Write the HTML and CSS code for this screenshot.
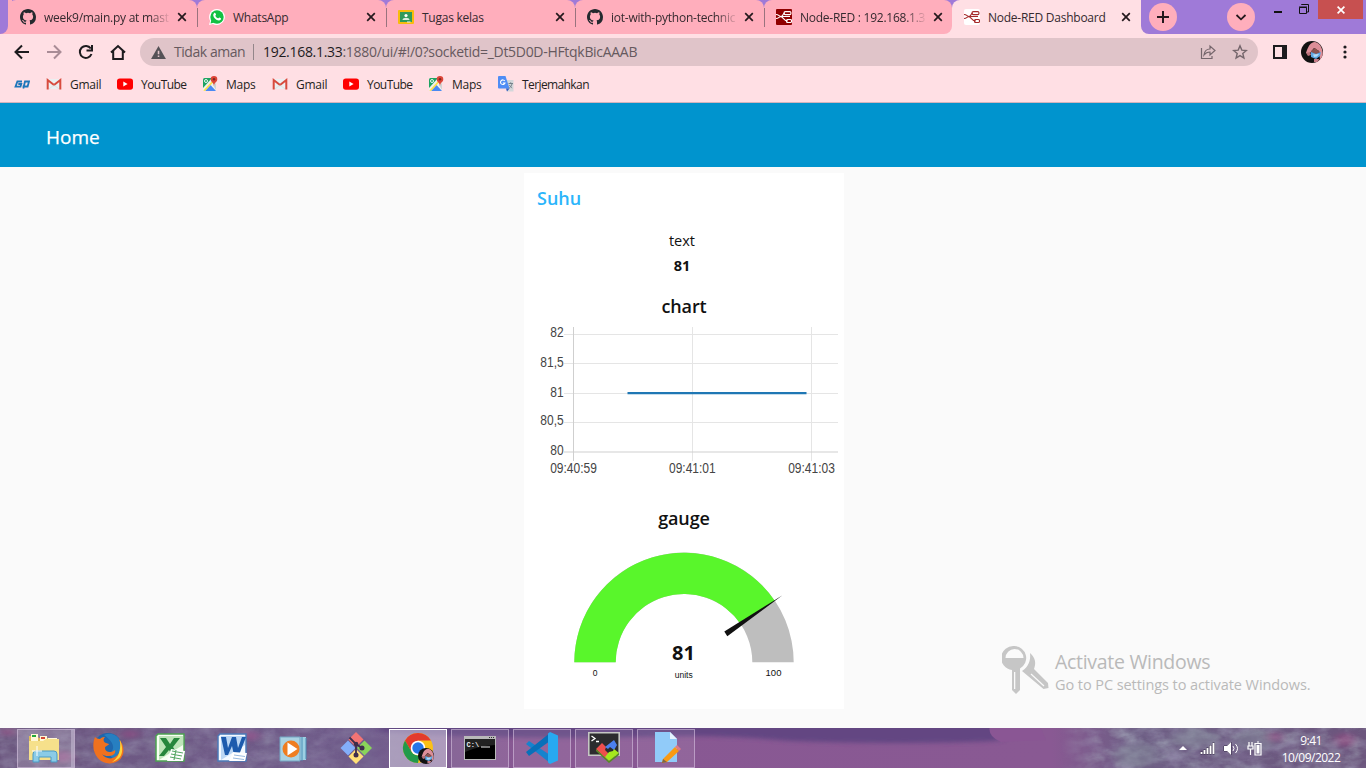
FILE: index.html
```html
<!DOCTYPE html>
<html lang="id">
<head>
<meta charset="utf-8">
<title>Node-RED Dashboard</title>
<link rel="stylesheet" href="styles.css">
</head>
<body>
<svg class="defs" width="0" height="0">
  <defs>
    <symbol id="github" viewBox="0 0 16 16"><path fill="#24292e" fill-rule="evenodd" d="M8 0C3.58 0 0 3.58 0 8c0 3.54 2.29 6.53 5.47 7.59.4.07.55-.17.55-.38 0-.19-.01-.82-.01-1.49-2.01.37-2.53-.49-2.69-.94-.09-.23-.48-.94-.82-1.13-.28-.15-.68-.52-.01-.53.63-.01 1.08.58 1.23.82.72 1.21 1.87.87 2.33.66.07-.52.28-.87.51-1.07-1.78-.2-3.64-.89-3.64-3.95 0-.87.31-1.59.82-2.15-.08-.2-.36-1.02.08-2.12 0 0 .67-.21 2.2.82a7.6 7.6 0 0 1 4 0c1.53-1.04 2.2-.82 2.2-.82.44 1.1.16 1.92.08 2.12.51.56.82 1.27.82 2.15 0 3.07-1.87 3.75-3.65 3.95.29.25.54.73.54 1.48 0 1.07-.01 1.93-.01 2.2 0 .21.15.46.55.38A8.01 8.01 0 0 0 16 8c0-4.42-3.58-8-8-8z"/></symbol>
    <symbol id="x" viewBox="0 0 10 10"><path d="M1.2 1.2l7.6 7.6M8.8 1.2L1.2 8.8" stroke="#24191d" stroke-width="1.7"/></symbol>
    <symbol id="nodes" viewBox="0 0 16 16"><g fill="none" stroke="currentColor" stroke-width="1.1"><path d="M0 5.500c3 0 3 2 5 2 2.500 0 1.500-3.500 4-3.500M4 7.500c4 0 3 4.500 8 4.500M0 9.500c3 0 3-2 5-2h9"/><rect x="8" y="2.600" width="7" height="3" rx="1.300"/><rect x="10.500" y="10.500" width="5" height="3" rx="1"/></g></symbol>
    <symbol id="gmail" viewBox="0 0 16 16"><path fill="#eceff1" d="M2 3h12v10H2z"/><path d="M1.700 13.500V4L8 9l6.300-5v9.500" fill="none" stroke="#d84b3e" stroke-width="2"/><path d="M3 13l5-4 5 4" fill="none" stroke="#d5d5d5" stroke-width=".6"/></symbol>
    <symbol id="youtube" viewBox="0 0 16 16"><rect y="2.500" width="16" height="11.300" rx="2.800" fill="#f00"/><path d="M6.300 5.600v5l4.300-2.500z" fill="#fff"/></symbol>
    <symbol id="maps" viewBox="0 0 16 16"><rect x="1" y="2" width="13" height="13" rx="1.500" fill="#f1f1ee"/><path d="M1 3.500Q1 2 2.500 2H10L1 12z" fill="#1ea362"/><path d="M3 15l5.500-6 5.500 6z" fill="#4a89f3"/><path d="M1.300 14.500L12 3l1.500 1L3 15z" fill="#ffe047"/><path d="M11 9l3-2v7z" fill="#d0d2d2"/><circle cx="4" cy="5" r="1.500" fill="none" stroke="#fff" stroke-width=".9"/><path d="M12 0a3.300 3.300 0 0 1 3.300 3.300C15.300 6 12.300 6.500 12 10c-.3-3.500-3.300-4-3.300-6.700A3.300 3.300 0 0 1 12 0z" fill="#dc4437"/><circle cx="12" cy="3.300" r="1.200" fill="#80271f"/></symbol>
    <symbol id="avatar" viewBox="0 0 22 22"><clipPath id="av"><circle cx="11" cy="11" r="11"/></clipPath><g clip-path="url(#av)"><path fill="#111" d="M0 0h22v22H0z"/><path d="M5 12C7 6 9 1 14 1c6 1 8 8 8 14l-3 4-1-9-5-3-4 5z" fill="#dd8e98"/><path d="M10 10l4-3 5 4-1 3-8-1z" fill="#8c5350"/><path d="M5 12l4-1 1 3-3 1z" fill="#b76f78"/><path d="M10 11l5 2 5-2-1 4-4 3-5-2z" fill="#5fa8e4"/><path d="M12 13.500l6-.5-2 2.500-3 .5z" fill="#b8dcf5"/><path d="M13 18l5 0-1 3h-4z" fill="#c77c88"/></g></symbol>
  </defs>
</svg>

<header class="browser">
  <div class="strip">
    <div class="edge"></div>
    <div class="tab first"><svg class="fav"><use href="#github"/></svg><span class="name fade">week9/main.py at mast</span><svg class="close"><use href="#x"/></svg></div>
    <div class="tab"><svg class="fav" viewBox="0 0 16 16"><path d="M8 0a8 8 0 1 1-4 15L0 16l1.100-4A8 8 0 0 1 8 0z" fill="#fff"/><circle cx="8" cy="8" r="6.700" fill="#12c143"/><path d="M1.500 14.500l1-4 3 3z" fill="#12c143"/><path d="M5 4.300c1-1 1.500-.2 2 1.300.2.600-.8 1-.6 1.400.6 1.200 1.500 1.900 2.700 2.300.5.100.9-1 1.300-.8 1.800.8 2 1 1.400 2-1.400 2-4.300.6-5.900-1C4.300 7.900 3.500 5.800 5 4.300z" fill="#fff"/></svg><span class="name">WhatsApp</span><svg class="close"><use href="#x"/></svg></div>
    <div class="tab"><svg class="fav" viewBox="0 0 16 16"><rect y="1" width="16" height="14" rx="1" fill="#f6bc0c"/><rect x="2" y="3" width="12" height="10" fill="#2f9a5b"/><circle cx="8" cy="6.500" r="1.600" fill="#fff"/><path d="M4.500 11c0-3 7-3 7 0z" fill="#d8eedf"/><path d="M9 12.500h3.500v1H9z" fill="#eee"/></svg><span class="name">Tugas kelas</span><svg class="close"><use href="#x"/></svg></div>
    <div class="tab"><svg class="fav"><use href="#github"/></svg><span class="name fade">iot-with-python-technic</span><svg class="close"><use href="#x"/></svg></div>
    <div class="tab last"><span class="fav red"><svg width="16" height="16"><use href="#nodes"/></svg></span><span class="name fade">Node-RED : 192.168.1.3</span><svg class="close"><use href="#x"/></svg></div>
    <div class="tab active"><span class="fav white"><svg width="16" height="16"><use href="#nodes"/></svg></span><span class="name">Node-RED Dashboard</span><svg class="close"><use href="#x"/></svg></div>
    <div class="frame">
      <svg class="round plus" viewBox="0 0 28 28"><circle cx="14" cy="14" r="14" fill="#ffaebc"/><path d="M14 8v12M8 14h12" stroke="#24191d" stroke-width="2"/></svg>
      <svg class="round down" viewBox="0 0 28 28"><circle cx="14" cy="14" r="14" fill="#ffaebc"/><path d="M9.500 12l4.500 4.300 4.500-4.300" fill="none" stroke="#24191d" stroke-width="1.800"/></svg>
      <svg class="wmin" width="8" height="2"><path d="M0 0h8v2H0z" fill="#111"/></svg>
      <svg class="wres" width="10" height="10" viewBox="0 0 10 10"><path d="M.5 3.500h7v6h-7zM0 3h8M2.500 1V.500h7V8H8" fill="none" stroke="#111"/></svg>
      <div class="wclose"><svg width="8" height="8" viewBox="0 0 8 8"><path d="M.6.600l6.800 6.800M7.400.600L.6 7.400" stroke="#fff" stroke-width="1.700"/></svg></div>
    </div>
  </div>

  <div class="toolbar">
    <svg class="nav" viewBox="0 0 124 36" fill="none" stroke="#1d1b1e" stroke-width="2"><path d="M29 18H16M22 11.500L15.500 18l6.500 6.500"/><path stroke="#a98c96" d="M47 18h13M54 11.500l6.500 6.500-6.500 6.500"/><path d="M90.800 14.500A6 6 0 1 0 91.500 20"/><path d="M92 11v5.500H86.500" /><path d="M111 18.500l7-6.500 7 6.500M113.200 17V25h9.600v-8" /></svg>
    <div class="omni">
      <svg class="warn" viewBox="0 0 16 14"><path d="M8 0l8 14H0z" fill="#545156"/><path d="M7.200 5h1.700v4H7.200zM7.200 10.300h1.700v1.600H7.200z" fill="#e0c4c9"/></svg>
      <span class="unsafe">Tidak aman</span><i class="bar"></i><span class="url"><b>192.168.1.33</b>:1880/ui/#!/0?socketid=_Dt5D0D-HFtqkBicAAAB</span>
      <svg class="acts" viewBox="0 0 48 16" fill="none" stroke="#75666c" stroke-width="1.200"><path d="M1.500 4v10.500H12V12"/><path d="M4 11c.5-4 3-6 6-6V2l5 4.500-5 4.500V8c-3 0-4.500 1-6 3z"/><path stroke-width="1.400" d="M40 1.800l1.800 4.300 4.500.4-3.500 3 1.100 4.500-3.900-2.400-3.900 2.400 1.100-4.500-3.500-3 4.500-.4z"/></svg>
    </div>
    <svg class="side" viewBox="0 0 14 14"><path d="M0 0h14v14H0z" fill="#1d1b1e"/><path d="M2 2h7v10H2z" fill="#ffdfe4"/></svg>
    <svg class="pic"><use href="#avatar"/></svg>
    <svg class="dots" viewBox="0 0 4 14" fill="#1d1b1e"><circle cx="2" cy="2" r="1.600"/><circle cx="2" cy="7" r="1.600"/><circle cx="2" cy="12" r="1.600"/></svg>
  </div>

  <nav class="marks">
    <span class="mark m0"><svg width="16" height="16" viewBox="0 0 16 16" fill="none" stroke="#1f76ba" stroke-width="1.800"><path d="M8 5.500H3.400L1.500 10.700H6.500L7.300 8H4.300M9.300 12.500L11 5.500h4l-1.400 5H8.600"/></svg></span>
    <span class="mark m1"><svg><use href="#gmail"/></svg>Gmail</span>
    <span class="mark m2"><svg><use href="#youtube"/></svg>YouTube</span>
    <span class="mark m3"><svg><use href="#maps"/></svg>Maps</span>
    <span class="mark m1"><svg><use href="#gmail"/></svg>Gmail</span>
    <span class="mark m2"><svg><use href="#youtube"/></svg>YouTube</span>
    <span class="mark m3"><svg><use href="#maps"/></svg>Maps</span>
    <span class="mark m4"><svg viewBox="0 0 16 16"><path d="M6 4h9.500v11.500H9z" fill="#d3d7da"/><path d="M1 0h6.500l4 12.500H1A1 1 0 0 1 0 11.500V1a1 1 0 0 1 1-1z" fill="#4f8df5"/><path d="M8 12.500h3.500L9 15.500z" fill="#3059c0"/><path d="M6.800 5A2.300 2.300 0 1 0 7 7H4.800" fill="none" stroke="#fff" stroke-width="1.100"/><path d="M10.500 7.500H15M12.700 6.300v1.200M14 7.700c-.4 2.300-1.500 3.500-2.700 4.300M11.500 9c.7 1.500 1.500 2.300 2.700 3" fill="none" stroke="#6d7c84" stroke-width=".9"/></svg>Terjemahkan</span>
  </nav>
</header>

<div class="appbar"><h1>Home</h1></div>

<main class="page">
  <section class="card">
    <h2>Suhu</h2>
    <div class="reading"><span>text</span><strong>81</strong></div>
    <h3 class="charth">chart</h3>
    <svg class="chart" viewBox="524 323 320 164">
      <g fill="none" stroke="#e5e5e5"><path d="M564 334.500h274M564 363.500h274M564 393.500h274M564 422.500h274M692.500 327v134M811.500 327v134"/><path stroke="#cfcfcf" d="M573.500 327v134M564 452h274"/></g>
      <path d="M627.500 393.200H806.500" stroke="#1f77b4" stroke-width="2.200"/>
      <g class="ticks"><g text-anchor="end">
        <text transform="translate(563.700 337.300) scale(1 1.160)">82</text><text transform="translate(563.700 367.300) scale(1 1.160)">81,5</text><text transform="translate(563.700 396.700) scale(1 1.160)">81</text><text transform="translate(563.700 425.300) scale(1 1.160)">80,5</text><text transform="translate(563.700 455) scale(1 1.160)">80</text></g>
        <g text-anchor="middle"><text transform="translate(573.500 473.300) scale(1 1.160)">09:40:59</text><text transform="translate(692.300 473.300) scale(1 1.160)">09:41:01</text><text transform="translate(811.500 473.300) scale(1 1.160)">09:41:03</text></g></g>
    </svg>
    <h3 class="gaugeh">gauge</h3>
    <svg class="gauge" viewBox="524 538 320 171">
      <path d="M574.300 662.300A109.700 109.700 0 0 1 793.700 662.300H752.300A68.300 68.300 0 0 0 615.700 662.300Z" fill="#bebebe"/>
      <path d="M574.300 662.300A109.700 109.700 0 0 1 774.700 600.700L740.500 623.900A68.300 68.300 0 0 0 615.700 662.300Z" fill="#59f62b"/>
      <path d="M724.300 631.600L782.500 595.200 727.300 636.200Z" fill="#111"/>
      <g text-anchor="middle" fill="#111"><text class="val" x="683.500" y="660">81</text><text class="lim" x="595" y="676">0</text><text class="lim hundred" x="773.500" y="676">100</text><text class="units" x="683.700" y="678">units</text></g>
    </svg>
  </section>
</main>

<aside class="watermark">
  <svg width="48" height="50" viewBox="0 0 48 50"><g fill="#c6c6c6"><path fill-rule="evenodd" d="M12.500 1a12 12 0 0 1 5.500 22.500V45l-4 4-4-4V25A12 12 0 0 1 12.500 1zM12.500 4a9 9 0 0 0-9 9h18a9 9 0 0 0-9-9zM12 27v17h1.300V27z"/><path d="M28 8c6 5 6 11 4 16l14 14 .5 5-5 1L20 26c6-4 9-10 8-18z"/></g><path d="M29 29l13 12" stroke="#fafafa" stroke-width="1.200"/></svg>
  <div><p class="w1">Activate Windows</p><p class="w2">Go to PC settings to activate Windows.</p></div>
</aside>

<footer class="taskbar">
  <svg class="wall" viewBox="0 0 1366 40" preserveAspectRatio="none">
    <defs>
      <filter id="soft" x="-10%" y="-50%" width="120%" height="200%"><feGaussianBlur stdDeviation="5 2"/></filter>
      <filter id="leaf" x="0" y="0" width="100%" height="100%"><feTurbulence type="fractalNoise" baseFrequency=".05 .09" numOctaves="4" seed="8"/><feColorMatrix values="0 0 0 0 .46  0 0 0 0 .53  0 0 0 0 .59  2 0 0 0 -.7"/></filter>
      <filter id="dark" x="0" y="0" width="100%" height="100%"><feTurbulence type="fractalNoise" baseFrequency=".06 .08" numOctaves="4" seed="3"/><feColorMatrix values="0 0 0 0 .3  0 0 0 0 .24  0 0 0 0 .42  0 2 0 0 -.8"/></filter>
      <linearGradient id="base"><stop offset="0" stop-color="#6c577f"/><stop offset=".27" stop-color="#705c8b"/><stop offset=".38" stop-color="#885893"/><stop offset=".77" stop-color="#895993"/><stop offset=".83" stop-color="#6d5e84"/><stop offset="1" stop-color="#6c567d"/></linearGradient>
      <linearGradient id="fin"><stop offset="0" stop-color="#000"/><stop offset=".15" stop-color="#fff"/></linearGradient>
      <linearGradient id="fout"><stop offset=".7" stop-color="#fff"/><stop offset="1" stop-color="#000"/></linearGradient>
      <mask id="right"><path d="M1060 0h306v40h-306z" fill="url(#fin)"/></mask>
      <mask id="left"><path d="M0 0h420v40H0z" fill="url(#fout)"/></mask>
    </defs>
    <path d="M0 0h1366v40H0z" fill="url(#base)"/>
    <g mask="url(#left)">
      <path d="M0 0h420v40H0z" filter="url(#dark)" opacity=".45"/>
      <path d="M0 0h420v40H0z" filter="url(#leaf)" opacity=".25"/>
    </g>
    <path d="M380-6H1000V13Q900 17 790 13 720 6 640 9 500 12 380 4z" fill="#5e4581" opacity=".9" filter="url(#soft)"/>
    <path d="M990-2h50l6 14-45 2q-14-6-11-16z" fill="#8a5694"/>
    <g mask="url(#right)">
      <path d="M1060 0h306v40h-306z" filter="url(#leaf)" opacity=".5"/>
      <path d="M1060 0h306v40h-306z" filter="url(#dark)" opacity=".4"/>
      <g fill="#84899a" opacity=".5" filter="url(#soft)"><ellipse cx="1136" cy="27" rx="22" ry="12"/><ellipse cx="1194" cy="10" rx="24" ry="9"/><ellipse cx="1256" cy="12" rx="20" ry="10"/></g>
    </g>
    <g fill="#a94383" opacity=".4" filter="url(#soft)"><ellipse cx="8" cy="4" rx="8" ry="4"/><ellipse cx="63" cy="29" rx="10" ry="6"/><ellipse cx="130" cy="6" rx="9" ry="4"/><ellipse cx="250" cy="8" rx="9" ry="5"/><ellipse cx="1275" cy="9" rx="7" ry="5"/><ellipse cx="1345" cy="12" rx="10" ry="7"/></g>
  </svg>
  <div class="apps">
    <span class="app open stack"><svg viewBox="0 0 32 32"><path d="M1 4h8l2 2h18v22H1z" fill="#dfbe5c"/><path d="M3 2h7v8H3zM12 4h7v6h-7zM20 6h9v8h-9z" fill="#fff8d7"/><path d="M4 3h4v2H4z" fill="#23a83b"/><path d="M13 5h4v2h-4z" fill="#d34834"/><path d="M22 7h4v2h-4z" fill="#2b8ae0"/><path d="M1 9h14l3-2h13v21H1z" fill="#f6e08b"/><path d="M5 30V22q0-3 3-3h18q3 0 3 3v8h-6v-5H11v5z" fill="#8bcbe7" stroke="#4b9bc6"/><path d="M9 14v10M4 19h10" stroke="#fff"/></svg></span>
    <span class="app"><svg viewBox="0 0 32 32"><circle cx="16" cy="15" r="14" fill="#1f67ae"/><path d="M12 3c9-4 18 3 18 13l-8 12-5-6c7-5 5-12-5-19z" fill="#277fc1"/><path d="M3 5c1 1 3 2 5 2 2-2 4-2 5-2-2 2-2 5 1 6l3 1c-1 2-4 2-4 4 0 5 7 5 10 2 2 6-9 8-13 4 4 6 13 6 17-1 3-6 1-11 0-14 8 9 5 22-6 24C8 34-3 20 3 5z" fill="#ef711f"/><path d="M28 8c5 12 1 20-8 22 7-4 9-12 8-22z" fill="#ffd43b"/></svg></span>
    <span class="app"><svg viewBox="0 0 32 32"><path d="M4 2h26v27H2V4z" fill="#f7fff3" stroke="#4ca251" stroke-width="1.500"/><path d="M5 4h24v9L5 28z" fill="#bee5b9"/><path d="M6 6h6l4 6 4-6h6l-7 9 6 9h-6l-4-6-5 6H5l7-9z" fill="#26863c"/><path d="M17 17l14 2-2 10H13z" fill="#fff"/><path d="M18 19l11 2M17 22l11 2M16 25l11 2M22 18l-2 10" stroke="#59a866" stroke-width="1.200"/></svg></span>
    <span class="app"><svg viewBox="0 0 32 32"><path d="M4 2h26v27H2V4z" fill="#f4f9ff" stroke="#4b79b8" stroke-width="1.500"/><path d="M5 4h24v9L5 28z" fill="#bcd7f4"/><path d="M5 5h5l2 11 4-11h4l2 11 4-11h4l-7 18h-5l-2-9-4 9H9z" fill="#1d5bad"/><path d="M17 20l14 1-2 8H13z" fill="#fff"/><path d="M18 23l11 1.500M17 26l11 1.500" stroke="#98b9df"/></svg></span>
    <span class="app"><svg viewBox="0 0 32 32"><path d="M8 5h20v23H8z" fill="#9dd0e3"/><path d="M28 6v21M24 5v24" stroke="#4c8db4"/><path d="M2 5h20v24H2z" fill="#aad2e2" stroke="#72a6c3"/><circle cx="13" cy="17" r="8.500" fill="#ef7d20"/><path d="M9.500 10.500v13l10-6.500z" fill="#fff"/></svg></span>
    <span class="app"><svg viewBox="0 0 32 32"><path d="M16 0l7.500 7.500L16 15 8.500 7.500z" fill="#f37474"/><path d="M8 8.500l7.500 7.500L8 23.500.5 16z" fill="#83aefa"/><path d="M24.500 8.500L32 16l-7.500 7.500L17 16z" fill="#8ad55a"/><path d="M16 17l7.500 7.500L16 32l-7.500-7.500z" fill="#ffdf76"/><path d="M9.500 5.500L16 12v12M16 12l6 4" fill="none" stroke="#3e2d4c" stroke-width="1.800"/><g fill="#3e2d4c"><circle cx="16" cy="12" r="2.300"/><circle cx="16" cy="23" r="2.500"/><circle cx="22" cy="16" r="2.500"/></g></svg></span>
    <span class="app open current"><svg viewBox="0 0 32 32"><circle cx="16" cy="16" r="15" fill="#fbc116"/><path d="M3 8.500A15 15 0 0 1 29 8.500H16L9.500 20z" fill="#e33b2e"/><path d="M3 8.500L9.500 19.700q3 4.300 8 3.700L16 31A15 15 0 0 1 3 8.500z" fill="#229a4a"/><circle cx="16" cy="16" r="7.300" fill="#fff"/><circle cx="16" cy="16" r="5.700" fill="#2675e8"/><use href="#avatar" x="16" y="16" width="16" height="16"/></svg></span>
    <span class="app open"><svg viewBox="0 0 32 32"><path d="M0 4h32v24H0z" fill="#b9b9b9"/><path d="M1 7h30v20H1z" fill="#000"/><path d="M1 7h30v6Q14 14 1 20z" fill="#222"/><path d="M25 5.500h1m1 0h1m1 0h1" stroke="#333"/><text x="2.500" y="15" class="cmd">C:\</text><path d="M17 15h9" stroke="#eee"/></svg></span>
    <span class="app open"><svg viewBox="0 0 32 32"><path d="M3 9L0 12l24 19V23z" fill="#1683ce"/><path d="M3 24l-3-4L24 1v8z" fill="#0870b9"/><path d="M24 0l8 3.500v25L24 32l-2-1.500V1.500z" fill="#27a9f1"/></svg></span>
    <span class="app open"><svg viewBox="0 0 32 32"><path d="M.8.800h30.400v22.400H.8z" fill="#2c2c2e" stroke="#c5c7c4" stroke-width="1.600"/><path d="M3.500 4l3.500 2.500L3.500 9M8 9.500h3" fill="none" stroke="#fff" stroke-width="1.300"/><path d="M8 17l6-6 4 4-1 3 4 4-3 5z" fill="#ef4e4d"/><path d="M17 15l9-7 3 5-3 5-4-3-2 2z" fill="#4b80ef"/><path d="M21 20l4-1 1-2 5 4-10 8-4-4z" fill="#a4e81d"/><path d="M8 17v2l13 12 10-8v-2l-10 8z" fill="#568a24"/></svg></span>
    <span class="app open"><svg viewBox="0 0 32 32"><path d="M5 0h15l7 7v23H5z" fill="#91cbf9"/><path d="M20 0v7h7z" fill="#e5f4ff"/><path d="M13 27L25 15l4 4-12 11-5 1z" fill="#f99a13"/><path d="M25 15l2-2 4 4-2 2z" fill="#df7b87"/><path d="M13 27l4 3-5 1z" fill="#7d6545"/></svg></span>
  </div>
  <div class="tray">
    <svg width="84" height="18" viewBox="0 0 84 18"><path d="M0 11l4-4 4 4z" fill="#fff"/><g stroke="#352846" stroke-width="1" fill="#fff" paint-order="stroke"><path d="M21.500 13h2v2h-2zM24.500 11h2v4h-2zM27.500 9h2v6h-2zM30.500 6.500h2V15h-2zM33.500 4h2v11h-2z"/><path d="M45 7h3l4-4v13l-4-4h-3z"/></g><path d="M54 7q2 2.500 0 5M56.500 5q4 4.500 0 9" fill="none" stroke="#fff"/><path d="M69 7h5v3h-5zM70 3v4M73 3v4M71.500 10v6M76 4.500h6V16h-6zM78 3h2" fill="none" stroke="#fff" stroke-width="1.200"/><path d="M77.500 6h3v8.500h-3z" fill="#fff"/></svg>
    <div class="clock"><span>9:41</span><span>10/09/2022</span></div>
  </div>
</footer>
</body>
</html>
```
FILE: styles.css
```css
* { box-sizing: border-box; }
body { margin: 0; width: 1366px; height: 768px; overflow: hidden; display: flex; flex-direction: column; background: #fafafa; font-family: "Open Sans", "Noto Sans", sans-serif; color: #111; }
h1, h2, h3, p { margin: 0; }
svg { display: block; flex: none; }
.defs { position: absolute; }

/* browser frame */
.browser { flex: none; height: 103px; background: #ffdfe4; border-bottom: 1px solid #d1b4bd; }
.strip { position: relative; z-index: 0; display: flex; height: 34px; background: linear-gradient(90deg, #ffaebc 12px, #9f7ad8 12px, #9f7ad8 1100px, #ffdfe4 1100px); }
.edge { width: 8px; background: #9f7ad8; border-bottom-right-radius: 8px; }
.tab { position: relative; width: 189px; height: 34px; padding: 0 10px 0 12px; display: flex; align-items: center; background: #ffaebc; border-radius: 8px 8px 0 0; font-size: 12px; letter-spacing: -.25px; }
.tab + .tab:not(.active)::before { content: ""; position: absolute; left: 0; top: 8px; width: 1px; height: 19px; background: #99737e; }
.tab.last { width: 188px; padding-right: 9px; border-radius: 8px 8px 8px 0; }
.tab.active { background: #ffdfe4; }
.tab.active::after { content: ""; position: absolute; z-index: -1; left: -8px; bottom: 0; width: 8px; height: 8px; background: #ffdfe4; }
.fav { width: 16px; height: 16px; margin-right: 8px; flex: none; }
.red { background: #8f0000; color: #fff; border-radius: 1px; }
.white { background: #fff; color: #a52a2a; border-radius: 2px; }
.name { flex: 1; white-space: nowrap; color: #352a2f; }
.fade { mask-image: linear-gradient(90deg, #000 105px, transparent 127px); }
.close { width: 10px; height: 10px; margin-left: 4px; }
.frame { flex: 1; display: flex; align-items: flex-start; background: #9f7ad8; border-bottom-left-radius: 8px; }
.round { width: 28px; height: 28px; margin-top: 3px; }
.plus { margin-left: 8px; }
.down { margin-left: 50px; }
.wmin { margin: 11px 0 0 19px; }
.wres { margin: 4px 0 0 17px; }
.wclose { margin-left: 9px; width: 45px; height: 19px; background: #c75050; display: grid; place-items: center; }

.toolbar { height: 36px; display: flex; align-items: center; }
.nav { width: 124px; height: 36px; margin-right: 16px; overflow: visible; }
.omni { width: 1118px; height: 28px; border-radius: 14px; background: #e0c4c9; display: flex; align-items: center; padding: 0 10px 0 11px; font-size: 14px; color: #66595e; white-space: nowrap; }
.warn { width: 15px; height: 13px; margin-right: 8px; }
.unsafe { width: 79px; letter-spacing: -.45px; }
.unsafe, .url { padding-bottom: 1px; }
.bar { width: 1px; height: 16px; background: #93868a; margin-right: 9px; }
.url { flex: 1; letter-spacing: -.3px; }
.url b { font-weight: 400; color: #1d1b1e; }
.acts { width: 48px; height: 16px; }
.side { width: 14px; height: 14px; margin-left: 15px; }
.pic { width: 22px; height: 22px; margin-left: 14px; }
.dots { width: 4px; height: 14px; margin-left: 20px; }

.marks { display: flex; height: 28px; align-items: center; padding-left: 14px; font-size: 12px; letter-spacing: -.25px; }
.mark { display: flex; align-items: center; gap: 8px; color: #251e21; }
.mark svg { width: 16px; height: 16px; }
.m0 { width: 32px; }
.m1 { width: 71px; }
.m2 { width: 85px; letter-spacing: -.55px; }
.m3 { width: 70px; }
.m4 { letter-spacing: -.6px; }

/* dashboard */
.appbar { flex: none; height: 64px; background: #0094ce; padding: 20px 46px; }
.appbar h1 { font-size: 19px; line-height: 28px; font-weight: 500; color: #fff; -webkit-text-stroke: .25px #fff; }
.page { flex: 1; display: flex; justify-content: center; padding: 6px 0 0 2px; }
.card { width: 320px; height: 536px; background: #fff; display: flex; flex-direction: column; align-items: stretch; }
.card h2 { height: 55px; padding: 13px 13px 0; font-size: 18px; line-height: 24px; font-weight: 600; color: #2bb5fb; }
.reading { display: flex; flex-direction: column; align-items: center; height: 64px; padding-right: 4px; font-size: 14.500px; line-height: 25px; }
.card h3 { font-size: 18px; line-height: 28px; height: 31px; font-weight: 600; letter-spacing: -.1px; text-align: center; }
.chart { width: 320px; height: 164px; }
.card .gaugeh { height: 51px; padding-top: 17px; }
.gauge { width: 320px; height: 171px; }
.ticks { font: 12px "Liberation Sans", Arial, sans-serif; fill: #444; }
.val { font-size: 20px; font-weight: 700; }
.lim, .units { font: 8.500px "Liberation Sans", Arial, sans-serif; }
.hundred { font-size: 9.500px; }

/* activation notice over the desktop */
.watermark { position: absolute; left: 1002px; top: 645px; display: flex; gap: 5px; color: #b9b9b9; white-space: nowrap; }
.w1 { font-size: 19.500px; line-height: 24px; margin-top: 5px; font-weight: 400; letter-spacing: -.3px; }
.w2 { font-size: 14.500px; line-height: 20px; margin-top: 1px; letter-spacing: -.07px; }

/* taskbar */
.taskbar { position: relative; flex: none; height: 40px; display: flex; justify-content: space-between; }
.wall { position: absolute; inset: 0; width: 1366px; height: 40px; z-index: -1; }
.apps { display: flex; gap: 4px; padding: 1px 0 0 17px; }
.app { width: 58px; height: 39px; display: grid; place-items: center; padding: 0 1px 2px 0; }
.app svg { width: 32px; height: 32px; }
.open { border: 1px solid rgba(220, 200, 230, .55); background: rgba(255, 255, 255, .08); }
.current { border-color: #fff; background: rgba(235, 235, 245, .45); }
.stack { box-shadow: inset -4px 0 0 -1px rgba(205, 195, 220, .5); background: rgba(255, 255, 255, .18); padding-right: 5px; }
.cmd { font: bold 7px "Liberation Mono", monospace; fill: #eee; }
.tray { display: flex; align-items: center; padding-right: 24px; }
.tray > svg { margin-right: 17px; }
.clock { display: flex; flex-direction: column; align-items: center; width: 62px; font-size: 12px; line-height: 17px; letter-spacing: -.5px; color: #fff; padding-top: 2px; }
```
